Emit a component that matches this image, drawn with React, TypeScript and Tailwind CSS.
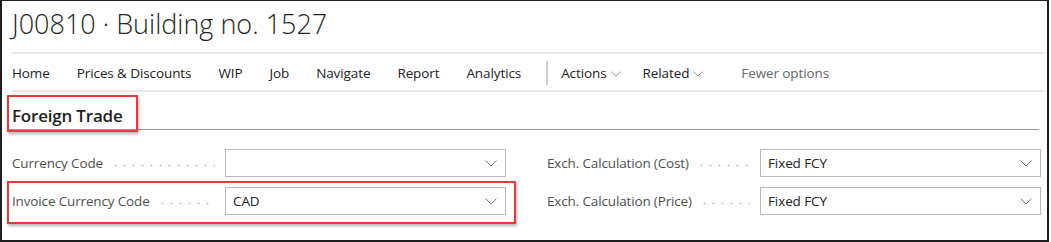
const font = { fontFamily: '"Open Sans", "Noto Sans", sans-serif' }

const navItems = ['Home', 'Prices & Discounts', 'WIP', 'Job', 'Navigate', 'Report', 'Analytics']

function Chevron({ className = '', w = 12, h = 7 }: { className?: string; w?: number; h?: number }) {
  return (
    <svg width={w} height={h} viewBox={`0 0 ${w} ${h}`} className={className} fill="none">
      <path d={`M0.5 0.5 L${w / 2} ${h - 1} L${w - 0.5} 0.5`} stroke="currentColor" strokeWidth="1" />
    </svg>
  )
}

function Field({ label, value }: { label: string; value: string }) {
  return (
    <div className="flex items-center h-[28px]">
      <div className="flex items-center w-[213px]">
        <span className="text-[13.5px] tracking-[-0.15px] text-[#505050] whitespace-nowrap">{label}</span>
        <span className="flex-1 h-[3px] ml-[8px] mr-[10px] mt-[4px] bg-[radial-gradient(circle,#c2c2c2_0.9px,transparent_1.1px)] bg-[length:9px_3px] bg-repeat-x" />
      </div>
      <div className="w-[281px] h-[28px] border border-[#b8b8b8] flex items-center pl-[7px] pr-[8px]">
        <span className="flex-1 text-[13.5px] tracking-[-0.1px] text-[#212121]">{value}</span>
        <Chevron className="text-[#777]" />
      </div>
    </div>
  )
}

export default function App() {
  return (
    <div className="w-[1051px] h-[242px] bg-white" style={font}>
      <div className="relative w-[1049px] h-[242px] border-2 border-t border-[#1e1e1e] pl-[10px] pr-[2px]">
        {/* Title */}
        <div className="h-[51px] flex items-center">
          <h1 className="text-[27px] font-light text-[#262626] leading-none -mt-[6px]">
            J00810 · Building no. 1527
          </h1>
        </div>
        <div className="h-[2px] bg-[#e8e8e8]" />

        {/* Action bar */}
        <div className="h-[36px] flex items-center pt-[2px] text-[13.5px] tracking-[-0.1px] text-[#212121]">
          <div className="flex items-center gap-[27px]">
            {navItems.map(item => (
              <span key={item}>{item}</span>
            ))}
          </div>
          <div className="w-[2px] h-[24px] bg-[#d0d0d0] ml-[25px] mr-[13px]" />
          <span>Actions</span>
          <Chevron w={10} h={6} className="ml-[4px] mt-[2px] text-[#999]" />
          <span className="ml-[22px]">Related</span>
          <Chevron w={10} h={6} className="ml-[4px] mt-[2px] text-[#999]" />
          <span className="ml-[38px] text-[#666]">Fewer options</span>
        </div>
        <div className="h-[2px] bg-[#e8e8e8]" />

        {/* Group header */}
        <div className="h-[38px] flex items-end border-b border-[#9a9a9a] mr-[6px] -ml-[3px] pl-[3px]">
          <span className="text-[17px] font-semibold tracking-[-0.2px] text-[#1f1f1f] leading-none mb-[5px]">Foreign Trade</span>
        </div>

        {/* Fields */}
        <div className="flex mt-[19px] gap-[41px]">
          <div className="flex flex-col gap-[10px]">
            <Field label="Currency Code" value="" />
            <Field label="Invoice Currency Code" value="CAD" />
          </div>
          <div className="flex flex-col gap-[10px]">
            <Field label="Exch. Calculation (Cost)" value="Fixed FCY" />
            <Field label="Exch. Calculation (Price)" value="Fixed FCY" />
          </div>
        </div>

        {/* Highlight annotations */}
        <div className="absolute left-[5px] top-[94px] w-[131px] h-[37px] border-2 border-[#e8393c] shadow-[1px_2px_3px_rgba(0,0,0,0.3)]" />
        <div className="absolute left-[5px] top-[180px] w-[509px] h-[43px] border-2 border-[#e8393c] shadow-[1px_2px_3px_rgba(0,0,0,0.3)]" />
      </div>
    </div>
  )
}
